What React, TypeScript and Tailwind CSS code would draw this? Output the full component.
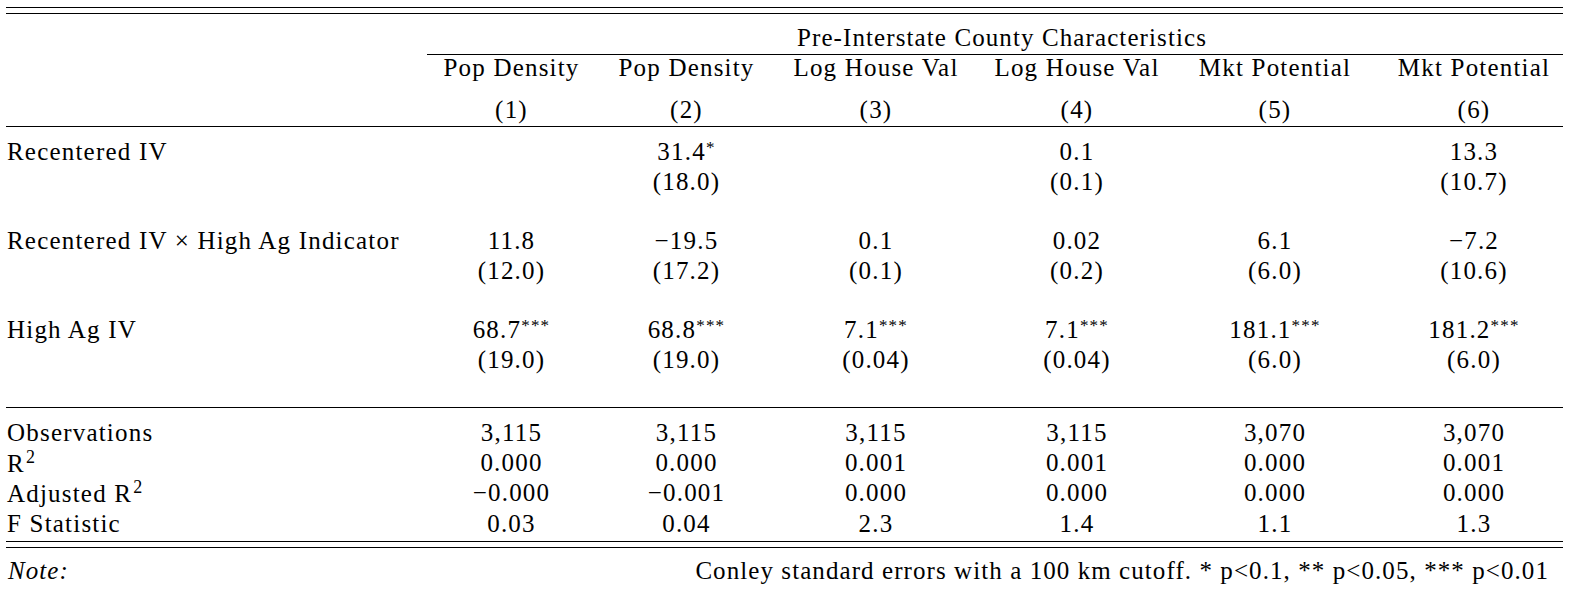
import type { ReactNode } from "react";

type Cell = { v: string; stars?: string };

const columns = ["Pop Density", "Pop Density", "Log House Val", "Log House Val", "Mkt Potential", "Mkt Potential"];

const coefRows: Array<{ label: string; est: Array<Cell | null>; se: Array<string | null> }> = [
  {
    label: "Recentered IV",
    est: [null, { v: "31.4", stars: "*" }, null, { v: "0.1" }, null, { v: "13.3" }],
    se: [null, "(18.0)", null, "(0.1)", null, "(10.7)"],
  },
  {
    label: "Recentered IV \u00d7 High Ag Indicator",
    est: [{ v: "11.8" }, { v: "\u221219.5" }, { v: "0.1" }, { v: "0.02" }, { v: "6.1" }, { v: "\u22127.2" }],
    se: ["(12.0)", "(17.2)", "(0.1)", "(0.2)", "(6.0)", "(10.6)"],
  },
  {
    label: "High Ag IV",
    est: [
      { v: "68.7", stars: "***" },
      { v: "68.8", stars: "***" },
      { v: "7.1", stars: "***" },
      { v: "7.1", stars: "***" },
      { v: "181.1", stars: "***" },
      { v: "181.2", stars: "***" },
    ],
    se: ["(19.0)", "(19.0)", "(0.04)", "(0.04)", "(6.0)", "(6.0)"],
  },
];

const statRows: Array<[ReactNode, string[]]> = [
  ["Observations", ["3,115", "3,115", "3,115", "3,115", "3,070", "3,070"]],
  [<>R<Square /></>, ["0.000", "0.000", "0.001", "0.001", "0.000", "0.001"]],
  [<>Adjusted R<Square /></>, ["\u22120.000", "\u22120.001", "0.000", "0.000", "0.000", "0.000"]],
  ["F Statistic", ["0.03", "0.04", "2.3", "1.4", "1.1", "1.3"]],
];

const grid = "grid grid-cols-[421px_169px_181px_198px_204px_192px_192px]";

function Sup({ children }: { children: ReactNode }) {
  return <span className="align-[7px] text-[17px] leading-none">{children}</span>;
}

function Square() {
  return <span className="ml-px align-[9px] text-[18px] leading-none">2</span>;
}

function Rule() {
  return <div className="h-px bg-black" />;
}

function ValueCell({ children, i }: { children?: ReactNode; i: number }) {
  return <div className={i === 5 ? "pl-[14px] text-center" : "text-center"}>{children}</div>;
}

export default function App() {
  return (
    <div
      className="h-[592px] w-[1570px] bg-white pl-[6px] pr-[7px] text-[25px] tracking-[0.048em] text-black"
      style={{ fontFamily: '"Liberation Serif", "Times New Roman", serif' }}
    >
      <div className="h-[7px]" />
      <Rule />
      <div className="h-[5px]" />
      <Rule />

      <div className={`${grid} pt-[9px] pb-px leading-[30px]`}>
        <div />
        <div className="col-span-6 pl-[14px] text-center tracking-[0.044em]">Pre-Interstate County Characteristics</div>
      </div>
      <div className={grid}>
        <div />
        <div className="col-span-6 h-px bg-black" />
      </div>
      <div className={`${grid} h-[26px] leading-[26px]`}>
        <div />
        {columns.map((c, i) => (
          <ValueCell i={i} key={i}>{c}</ValueCell>
        ))}
      </div>
      <div className={`${grid} pt-[14px] pb-px leading-[30px]`}>
        <div />
        {columns.map((_, i) => (
          <ValueCell i={i} key={i}>({i + 1})</ValueCell>
        ))}
      </div>
      <Rule />

      <div className="pt-[10px] pb-[32px]">
        {coefRows.map((row, r) => (
          <div className={`${grid} leading-[30px] ${r < 2 ? "pb-[29px]" : ""}`} key={row.label}>
            <div className="pl-px">{row.label}</div>
            {row.est.map((cell, i) => (
              <ValueCell i={i} key={i}>
                {cell ? (
                  <>
                    {cell.v}
                    {cell.stars ? <Sup>{cell.stars}</Sup> : null}
                  </>
                ) : null}
              </ValueCell>
            ))}
            <div />
            {row.se.map((s, i) => (
              <ValueCell i={i} key={i}>{s}</ValueCell>
            ))}
          </div>
        ))}
      </div>
      <Rule />

      <div className="pt-[10px] pb-[2px]">
        {statRows.map(([label, vals], r) => (
          <div className={`${grid} leading-[29.7px]`} key={r}>
            <div className="pl-px">{label}</div>
            {vals.map((v, i) => (
              <ValueCell i={i} key={i}>{v}</ValueCell>
            ))}
          </div>
        ))}
      </div>
      <Rule />
      <div className="h-[5.5px]" />
      <Rule />

      <div className="flex justify-between pt-[8px] pl-[2px] pr-[14px] leading-[30px] tracking-[0.043em]">
        <span className="italic">Note:</span>
        <span>Conley standard errors with a 100 km cutoff. * p&lt;0.1, ** p&lt;0.05, *** p&lt;0.01</span>
      </div>
    </div>
  );
}
